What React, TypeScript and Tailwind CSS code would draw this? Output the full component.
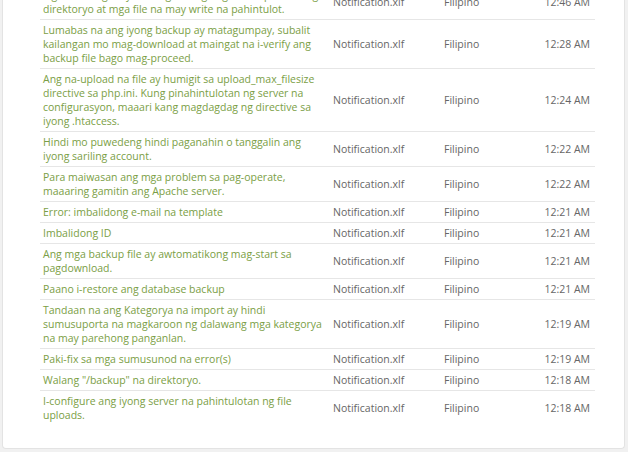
const rows = [
  { msg: "Siguraduhing may tamang setting ang server para sa mga\ndirektoryo at mga file na may write na pahintulot.", time: "12:46 AM" },
  { msg: "Lumabas na ang iyong backup ay matagumpay, subalit kailangan mo mag-download at maingat na i-verify ang backup file bago mag-proceed.", time: "12:28 AM" },
  { msg: "Ang na-upload na file ay humigit sa upload_max_filesize directive sa php.ini. Kung pinahintulotan ng server na configurasyon, maaari kang magdagdag ng directive sa iyong .htaccess.", time: "12:24 AM" },
  { msg: "Hindi mo puwedeng hindi paganahin o tanggalin ang iyong sariling account.", time: "12:22 AM" },
  { msg: "Para maiwasan ang mga problem sa pag-operate, maaaring gamitin ang Apache server.", time: "12:22 AM" },
  { msg: "Error: imbalidong e-mail na template", time: "12:21 AM" },
  { msg: "Imbalidong ID", time: "12:21 AM" },
  { msg: "Ang mga backup file ay awtomatikong mag-start sa pagdownload.", time: "12:21 AM" },
  { msg: "Paano i-restore ang database backup", time: "12:21 AM" },
  { msg: "Tandaan na ang Kategorya na import ay hindi sumusuporta na magkaroon ng dalawang mga kategorya na may parehong panganlan.", time: "12:19 AM" },
  { msg: "Paki-fix sa mga sumusunod na error(s)", time: "12:19 AM" },
  { msg: 'Walang "/backup" na direktoryo.', time: "12:18 AM" },
  { msg: "I-configure ang iyong server na pahintulotan ng file uploads.", time: "12:18 AM" },
];

export default function App() {
  return (
    <div
      className="h-[452px] overflow-hidden bg-[#f1f1f1] pl-[2px] pr-[3px] pb-[3px] flex flex-col justify-end"
      style={{ fontFamily: '"Open Sans", sans-serif' }}
    >
      <div className="bg-white border border-[#e3e3e3] border-t-0 rounded-b-[4px] pl-[37px] pr-[29px] pb-[23px] text-[10.5px] leading-[14px]">
        <table className="w-[555px] table-fixed border-collapse">
          <colgroup>
            <col className="w-[290px]" />
            <col className="w-[111px]" />
            <col className="w-[80px]" />
            <col className="w-[74px]" />
          </colgroup>
          <tbody>
            {rows.map((r, i) => (
              <tr key={i} className={i < rows.length - 1 ? "border-b border-[#e6e6e6]" : ""}>
                <td className="pl-[3px] pr-[4px] py-[3px] align-middle text-[#7a9e45] whitespace-pre-line">
                  {r.msg}
                </td>
                <td className="pl-[3px] align-middle text-[#666]">Notification.xlf</td>
                <td className="pl-[3px] align-middle text-[#666]">Filipino</td>
                <td className="pr-[5px] align-middle text-right text-[#666]">{r.time}</td>
              </tr>
            ))}
          </tbody>
        </table>
      </div>
    </div>
  );
}
